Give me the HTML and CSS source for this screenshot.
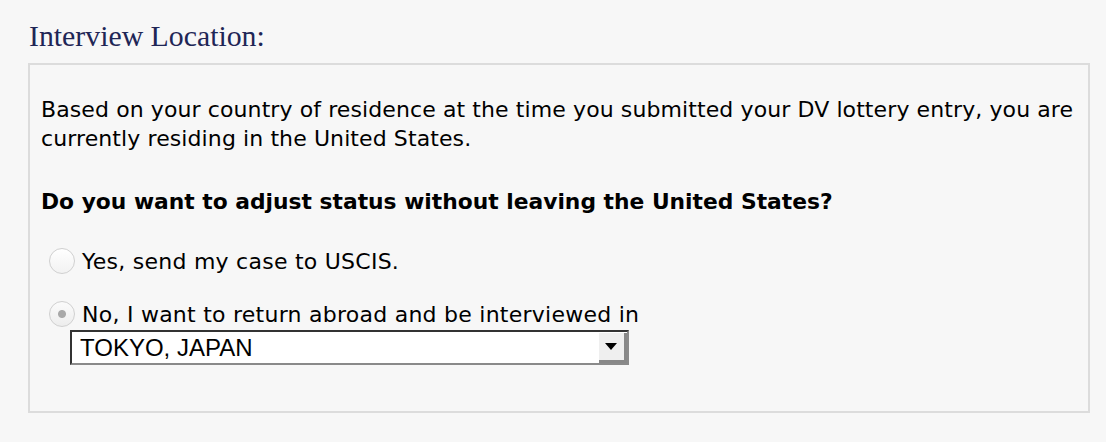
FILE: index.html
```html
<!DOCTYPE html>
<html>
<head>
<meta charset="utf-8">
<title>Interview Location</title>
<link rel="stylesheet" href="styles.css">
</head>
<body>
<div class="page">
	<h2 class="title">Interview Location:</h2>
	<div class="panel">
		<p class="intro">Based on your country of residence at the time you submitted your DV lottery entry, you are currently residing in the United States.</p>
		<p class="question">Do you want to adjust status without leaving the United States?</p>
		<ul class="choices">
			<li>
				<label class="choice"><input type="radio" name="adjust" value="yes"><span>Yes, send my case to USCIS.</span></label>
			</li>
			<li>
				<label class="choice"><input type="radio" name="adjust" value="no" checked><span>No, I want to return abroad and be interviewed in</span></label>
				<div class="select-wrap">
					<select class="post">
						<option>TOKYO, JAPAN</option>
					</select>
					<span class="select-btn"></span>
				</div>
			</li>
		</ul>
	</div>
</div>
</body>
</html>
```
FILE: styles.css
```css
* {margin:0; padding:0;}
li {list-style:none;}

body {background:#f7f7f7; font-family:"DejaVu Sans", Verdana, sans-serif; color:#000;}

.page {padding:19px 16px 0 28px;}

.title {font-family:"Liberation Serif", "Times New Roman", serif; font-weight:normal; font-size:29.8px; line-height:34px; color:#1f2656; padding-left:1px; margin-bottom:10px;}

.panel {border:2px solid #dcdcdc; height:346px; padding:0 11px;}

.intro {font-size:22px; letter-spacing:0.1px; line-height:29px; margin-top:29px; padding-top:0.5px;}
.question {font-size:21.8px; font-weight:bold; line-height:29px; margin-top:34px;}

.choices {margin-top:31px; padding-left:8px;}
.choices li {margin-bottom:24px;}

.choice {display:flex; align-items:center; gap:7px; font-size:22px; letter-spacing:0.25px; line-height:29px;}
.choice input {appearance:none; -webkit-appearance:none; width:26px; height:26px; border-radius:50%; border:1px solid #d0d0d0; background:linear-gradient(#fff, #f2f2f2); margin:0; flex:none;}
.choice input:checked {background:radial-gradient(circle, #a8a8a8 0, #a8a8a8 3.5px, transparent 4.5px), linear-gradient(#fbfbfb, #ededed);}

.select-wrap {position:relative; width:559px; height:35px; margin-left:21px; margin-top:1.5px;}
.post {appearance:none; -webkit-appearance:none; width:100%; height:100%; background:#fff; border:2px solid; border-color:#333 #8a8a8a #8a8a8a #333; border-radius:0; font-family:"Liberation Sans", Arial, sans-serif; font-size:24px; padding:0 0 0 8px; color:#000; outline:none;}
.select-btn {position:absolute; right:2px; top:3px; width:28px; height:30px; background:#efefef; border-right:3px solid #888; border-bottom:3px solid #888; box-sizing:border-box;}
.select-btn::after {content:""; position:absolute; left:6px; top:10px; border-left:6px solid transparent; border-right:6px solid transparent; border-top:7px solid #000;}
```
